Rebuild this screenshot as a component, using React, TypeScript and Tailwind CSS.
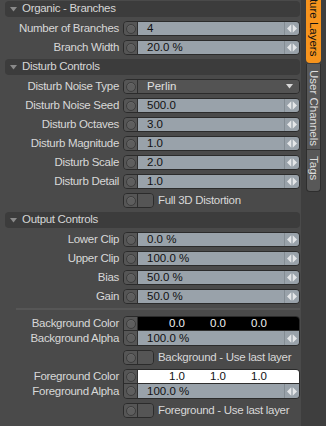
import React from "react";

const FONT = "font-['Liberation_Sans','Arial',sans-serif]";

function Arrows() {
  return (
    <svg width="10" height="9" viewBox="0 0 10 9">
      <polygon points="0,4.5 4,0.5 4,8.5" fill="#e4e6e8" />
      <rect x="4.5" y="0.5" width="1" height="8" fill="#c9ced2" />
      <polygon points="6,0.5 10,4.5 6,8.5" fill="#e4e6e8" />
    </svg>
  );
}

function Dot({ className = "" }: { className?: string }) {
  return (
    <div className={`w-[14px] shrink-0 bg-[#565656] flex items-center justify-center border-r border-[#2e2e2e] ${className}`}>
      <div className="w-[10px] h-[10px] rounded-full border border-[#3d3d3d] bg-[#5e5e5e] shadow-[inset_0_1px_0_#6a6a6a]" />
    </div>
  );
}

function Header({ title }: { title: string }) {
  return (
    <div className="h-[16px] mb-[4px] rounded-[4px] bg-[#3c3c3c] flex items-center pl-[5px] shrink-0">
      <svg width="7" height="5" viewBox="0 0 7 5">
        <polygon points="0,0 7,0 3.5,4.5" fill="#8a8a8a" />
      </svg>
      <span className="ml-[5px] text-[11.5px] text-[#d6d6d6] tracking-[-0.3px]">{title}</span>
    </div>
  );
}

function Label({ text }: { text: string }) {
  return (
    <div className="w-[114px] shrink-0 text-right text-[11.5px] text-[#d8d8d8] tracking-[-0.3px] leading-[15px] whitespace-nowrap">
      {text}
    </div>
  );
}

function NumRow({ label, value }: { label: string; value: string }) {
  return (
    <div className="h-[15px] mb-[4px] flex shrink-0">
      <Label text={label} />
      <div className="ml-[4px] flex-1 flex rounded-[4px] border border-[#2b2b2b] overflow-hidden">
        <Dot />
        <div className="flex-1 bg-[#99a2aa] pl-[9px] text-[11.5px] text-[#111] leading-[13px]">{value}</div>
        <div className="w-[15px] bg-[#99a2aa] border-l border-[#838c93] flex items-center justify-center">
          <Arrows />
        </div>
      </div>
    </div>
  );
}

function SelectRow({ label, value }: { label: string; value: string }) {
  return (
    <div className="h-[15px] mb-[4px] flex shrink-0">
      <Label text={label} />
      <div className="ml-[4px] flex-1 flex rounded-[4px] border border-[#2b2b2b] overflow-hidden">
        <Dot />
        <div className="flex-1 bg-[#535353] pl-[9px] pr-[6px] flex items-center justify-between text-[11.5px] text-[#e0e0e0] leading-[13px]">
          <span>{value}</span>
          <svg width="7" height="5" viewBox="0 0 7 5">
            <polygon points="0,0 7,0 3.5,4.5" fill="#d8d8d8" />
          </svg>
        </div>
      </div>
    </div>
  );
}

function CheckRow({ label }: { label: string }) {
  return (
    <div className="h-[15px] flex shrink-0">
      <div className="w-[114px] shrink-0" />
      <div className="ml-[4px] w-[31px] flex rounded-[4px] border border-[#2b2b2b] overflow-hidden">
        <Dot />
        <div className="flex-1 bg-[#555555]" />
      </div>
      <span className="ml-[4px] text-[11.5px] text-[#d8d8d8] tracking-[-0.3px] leading-[15px] whitespace-nowrap">{label}</span>
    </div>
  );
}

function ColorGroup({ name, dark, num }: { name: string; dark: boolean; num: string }) {
  return (
    <div className="h-[30px] flex shrink-0">
      <div className="flex flex-col">
        <Label text={`${name} Color`} />
        <Label text={`${name} Alpha`} />
      </div>
      <div className="ml-[4px] flex-1 flex flex-col rounded-[4px] border border-[#2b2b2b] overflow-hidden">
        <div className="h-[14px] flex border-b border-[#2e2e2e]">
          <Dot />
          <div className={`flex-1 flex pl-[31px] text-[11.5px] leading-[13px] ${dark ? "bg-[#000] text-[#f0f0f0]" : "bg-[#fff] text-[#111]"}`}>
            <span className="w-[41px]">{num}</span>
            <span className="w-[41px]">{num}</span>
            <span className="w-[41px]">{num}</span>
          </div>
        </div>
        <div className="flex-1 flex">
          <Dot />
          <div className="flex-1 bg-[#99a2aa] pl-[9px] text-[11.5px] text-[#111] leading-[14px]">100.0 %</div>
          <div className="w-[15px] bg-[#99a2aa] border-l border-[#838c93] flex items-center justify-center">
            <Arrows />
          </div>
        </div>
      </div>
    </div>
  );
}

function Tabs() {
  return (
    <div className="w-[25px] h-full bg-[#3e3e3e] pl-[5px] flex flex-col shrink-0">
      {/* first tab's label runs past the top edge, as in the panel */}
      <div className="w-[15px] h-[63px] bg-[#f7941d] rounded-b-[4px] overflow-hidden flex flex-col justify-end items-center pb-[7px]">
        <span className="[writing-mode:vertical-rl] text-[11.5px] leading-[15px] text-[#111] whitespace-nowrap">Texture Layers</span>
      </div>
      <div className="w-[15px] mt-[1px] bg-[#585858] border border-[#2e2e2e] border-t-0 rounded-b-[4px] flex flex-col items-center">
        <div className="h-[86px] w-full flex justify-center pt-[6px] border-b border-[#3a3a3a]">
          <span className="[writing-mode:vertical-rl] text-[11.5px] leading-[13px] text-[#dcdcdc] whitespace-nowrap">User Channels</span>
        </div>
        <div className="h-[41px] w-full flex justify-center pt-[6px]">
          <span className="[writing-mode:vertical-rl] text-[11.5px] leading-[13px] text-[#dcdcdc] whitespace-nowrap">Tags</span>
        </div>
      </div>
    </div>
  );
}

export default function App() {
  return (
    <div className={`w-[326px] h-[426px] flex bg-[#4a4a4a] overflow-hidden ${FONT}`}>
      <div className="w-[301px] pl-[5px] pr-[1px] pt-[1px] flex flex-col shrink-0">
        <Header title="Organic - Branches" />
        <NumRow label="Number of Branches" value="4" />
        <NumRow label="Branch Width" value="20.0 %" />

        <Header title="Disturb Controls" />
        <SelectRow label="Disturb Noise Type" value="Perlin" />
        <NumRow label="Disturb Noise Seed" value="500.0" />
        <NumRow label="Disturb Octaves" value="3.0" />
        <NumRow label="Disturb Magnitude" value="1.0" />
        <NumRow label="Disturb Scale" value="2.0" />
        <NumRow label="Disturb Detail" value="1.0" />
        <div className="mb-[4px]">
          <CheckRow label="Full 3D Distortion" />
        </div>

        <Header title="Output Controls" />
        <NumRow label="Lower Clip" value="0.0 %" />
        <NumRow label="Upper Clip" value="100.0 %" />
        <NumRow label="Bias" value="50.0 %" />
        <NumRow label="Gain" value="50.0 %" />

        <div className="ml-[11px] mb-[6px] h-[2px] border-t border-[#383838] border-b border-[#565656] shrink-0" />

        <ColorGroup name="Background" dark={true} num="0.0" />
        <div className="mt-[4px]">
          <CheckRow label="Background - Use last layer" />
        </div>
        <div className="mt-[4px]">
          <ColorGroup name="Foreground" dark={false} num="1.0" />
        </div>
        <div className="mt-[4px]">
          <CheckRow label="Foreground - Use last layer" />
        </div>
      </div>
      <Tabs />
    </div>
  );
}
